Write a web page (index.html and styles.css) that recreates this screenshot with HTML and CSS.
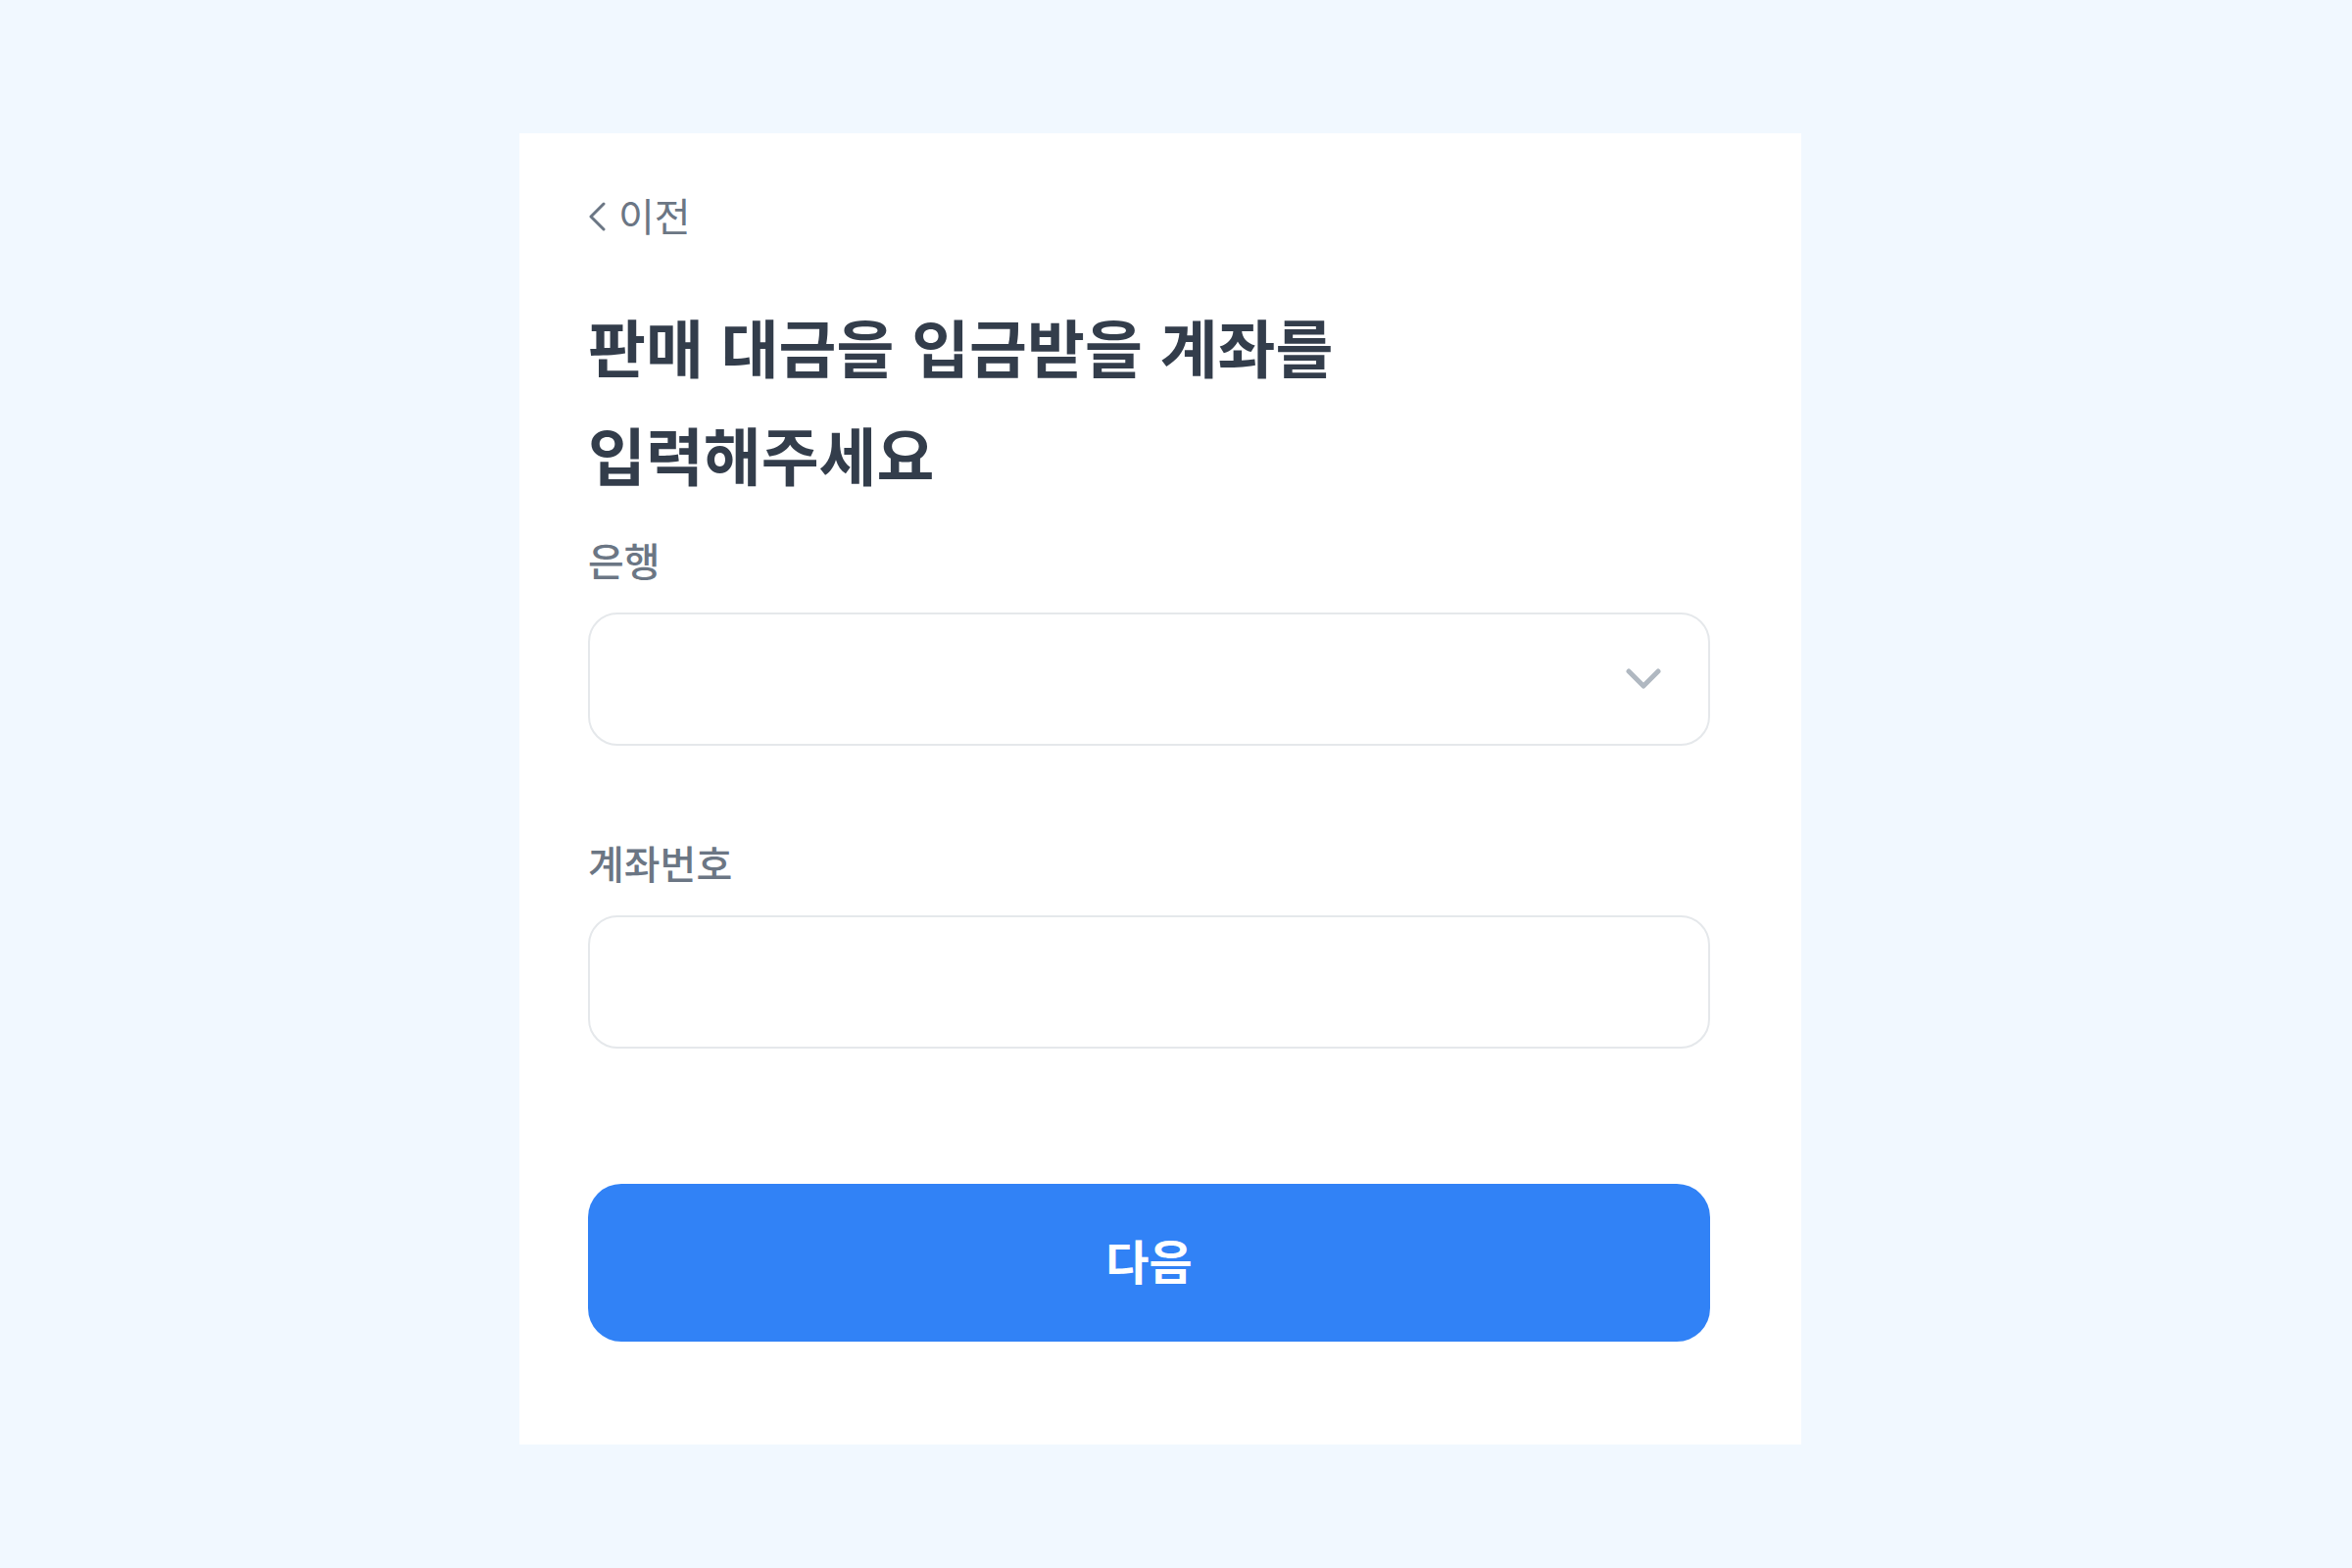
FILE: index.html
```html
<!DOCTYPE html>
<html lang="ko">
<head>
<meta charset="utf-8">
<title>계좌 입력</title>
<link rel="stylesheet" href="styles.css">
</head>
<body>
<main class="card">
  <a class="back" href="#">
    <svg class="back-icon" width="18" height="30" viewBox="0 0 18 30" aria-hidden="true">
      <polyline points="16,2 3,15 16,28" fill="none" stroke="#6b7684" stroke-width="3" stroke-linecap="round" stroke-linejoin="round"/>
    </svg>
    <span>이전</span>
  </a>
  <h1 class="title">판매 대금을 입금받을 계좌를<br>입력해주세요</h1>
  <div class="field">
    <label class="label">은행</label>
    <div class="select">
      <svg class="chevron" width="36" height="22" viewBox="0 0 36 22" aria-hidden="true">
        <polyline points="3,3 18,18 33,3" fill="none" stroke="#b0b8c1" stroke-width="5" stroke-linecap="round" stroke-linejoin="round"/>
      </svg>
    </div>
  </div>
  <div class="field field-account">
    <label class="label">계좌번호</label>
    <div class="input"></div>
  </div>
  <button class="next" type="button">다음</button>
</main>
</body>
</html>
```

FILE: styles.css
```css
html, body {
  margin: 0;
  padding: 0;
}
body {
  background: #f1f8ff;
  font-family: "Noto Sans CJK KR", "Noto Sans", sans-serif;
  width: 2400px;
  height: 1600px;
  overflow: hidden;
}
.card {
  box-sizing: border-box;
  width: 1308px;
  height: 1338px;
  margin: 136px 0 0 530px;
  background: #ffffff;
  padding: 55px 93px 105px 70px;
  display: flex;
  flex-direction: column;
}
.back {
  display: flex;
  align-items: center;
  gap: 13px;
  height: 56px;
  font-size: 40px;
  line-height: 56px;
  color: #6b7684;
  text-decoration: none;
  align-self: flex-start;
}
.back-icon {
  margin-top: 4px;
}
.title {
  margin: 50px 0 0 0;
  font-size: 64px;
  line-height: 110px;
  font-weight: 700;
  color: #333d4b;
}
.field {
  display: flex;
  flex-direction: column;
  gap: 26px;
  margin-top: 26px;
}
.field-account {
  margin-top: 91px;
}
.label {
  font-size: 40px;
  line-height: 56px;
  font-weight: 500;
  color: #6b7684;
}
.select, .input {
  box-sizing: border-box;
  height: 136px;
  border: 2px solid #e5e8eb;
  border-radius: 30px;
  background: #fff;
}
.select {
  display: flex;
  align-items: center;
  justify-content: flex-end;
  padding-right: 48px;
}
.next {
  margin-top: 138px;
  height: 161px;
  border: none;
  border-radius: 34px;
  background: #3182f6;
  color: #ffffff;
  font-family: "Noto Sans CJK KR", "Noto Sans", sans-serif;
  font-size: 48px;
  font-weight: 700;
  padding: 0 0 8px 0;
}
```
